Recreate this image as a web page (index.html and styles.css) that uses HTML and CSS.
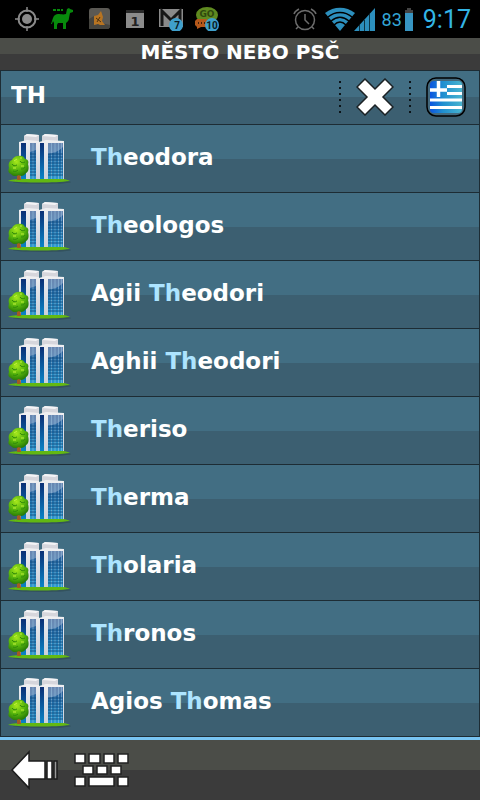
FILE: index.html
```html
<!DOCTYPE html>
<html lang="cs">
<head>
    <meta charset="UTF-8">
    <meta name="viewport" content="width=device-width, initial-scale=1.0">
    <title>Město nebo PSČ</title>
    <link rel="stylesheet" href="styles.css">
</head>
<body>
    <!-- shared city icon -->
    <svg class="defs" aria-hidden="true">
        <defs>
            <linearGradient id="glass" x1="0" y1="0" x2="0" y2="1">
                <stop offset="0" stop-color="#27508c"/>
                <stop offset="0.5" stop-color="#2579b3"/>
                <stop offset="1" stop-color="#2a9ad0"/>
            </linearGradient>
            <linearGradient id="shade" x1="0" y1="0" x2="0" y2="1">
                <stop offset="0" stop-color="#0b2f75"/>
                <stop offset="1" stop-color="#0a86c8"/>
            </linearGradient>
            <linearGradient id="wall" x1="0" y1="0" x2="0" y2="1">
                <stop offset="0" stop-color="#f0f0f2"/>
                <stop offset="1" stop-color="#c9cfda"/>
            </linearGradient>
            <radialGradient id="leaf" cx="0.4" cy="0.3" r="0.7">
                <stop offset="0" stop-color="#a6e81c"/>
                <stop offset="0.6" stop-color="#55b40c"/>
                <stop offset="1" stop-color="#2a7d08"/>
            </radialGradient>
            <symbol id="city" viewBox="0 0 64 52">
                <ellipse cx="34" cy="49" rx="29" ry="2" fill="#2d4a50" opacity="0.6"/>
                <path d="M16 3l3-2 12 1v7H16zM34 3l3-2 13 1v7H34z" fill="#d6d6dc"/>
                <path d="M16 3l3-2 12 1-3 2zM34 3l3-2 13 1-3 2z" fill="#f4f4f6"/>
                <path d="M11 9l8-2 12 1v39H11z" fill="url(#wall)"/>
                <path d="M31 9l7-2 18 1v39H31z" fill="url(#wall)"/>
                <path d="M13 10h5v37h-5zM32 10h4v37h-4z" fill="url(#shade)"/>
                <path d="M22 10h6v37h-6zM40 10h15v37H40z" fill="url(#glass)"/>
                <path d="M22 10h6v7l-6 2zM40 10h15v4c-4 4-9 6-15 7z" fill="#a9bcd6" opacity="0.5"/>
                <path d="M25 10v37M43.500 10v37M47 10v37M50.500 10v37M53.500 10v37" stroke="#9cc4e0" stroke-width="0.7" opacity="0.8"/>
                <path d="M22 21h6M22 24h6M22 27h6M22 30h6M22 33h6M22 36h6M22 39h6M22 42h6M40 21h15M40 24h15M40 27h15M40 30h15M40 33h15M40 36h15M40 39h15M40 42h15" stroke="#0d4a80" stroke-width="0.9"/>
                <path d="M0 48c4-2 12-2 17-2h38c3 0 5 1 7 2-16 2-45 2-62 0z" fill="#62b812"/>
                <path d="M0 47c14 1 48 1 62 0-12 1-48 1-62 0z" fill="#a3de25"/>
                <path d="M9 36h3l1 11H9z" fill="#a35b22"/>
                <path d="M10 23c3-1 6 0 7 3 3 0 4 3 3 5 1 3 1 8-2 9-2 3-5 4-7 2-3 2-7 1-8-1-3-1-3-4-2-6-1-4 0-7 3-8 1-2 3-4 6-4z" fill="url(#leaf)"/>
                <path d="M4 31c1 2 3 2 5 1M12 28c1 2 3 2 5 1M5 38c2 1 4 0 5-1M13 36c2 0 3 0 4-2" fill="none" stroke="#2f880b" stroke-width="1"/>
                <path d="M6 28l3-2M12 25h2M5 35h3M13 33h3" stroke="#c4f13c" stroke-width="1"/>
            </symbol>
        </defs>
    </svg>

    <div class="screen">
        <div class="status-bar">
            <div class="notifications">
                <svg width="24" height="24" viewBox="0 0 24 24">
                    <g fill="none" stroke="#8a8a8a">
                        <circle cx="12" cy="12" r="8.5" stroke-width="2"/>
                        <path d="M12 0v5M12 19v5M0 12h5M19 12h5" stroke-width="1.5"/>
                    </g>
                    <circle cx="12" cy="12" r="5" fill="#8a8a8a"/>
                </svg>
                <svg width="24" height="24" viewBox="0 0 24 24">
                    <path d="M2 11c1-3 3-4 5-4 3 0 5 1 8 0l1-5 2-1 1 1 3 1v2l-3 1-1 5c0 3-2 4-3 5v6h-3v-6H7l-1 2v4H3v-6l-1-2-1 3H0z" fill="#078a0c"/>
                    <path d="M2 3h3M6 3h3M10 3h2" stroke="#078a0c" stroke-width="2"/>
                </svg>
                <svg width="24" height="24" viewBox="0 0 24 24">
                    <rect x="2" y="1" width="21" height="21" rx="3" fill="#5b5954"/>
                    <path d="M2 22V12l5-3v9l7-2 9 2v2l-2 2z" fill="#45443f"/>
                    <path d="M7 18V9l4-1 3-4 2 6-1 4 3 4h-5l-2-1z" fill="#b77422"/>
                    <path d="M9 11l5 4M13 10l-3 5" stroke="#4b3010"/>
                </svg>
                <svg width="24" height="24" viewBox="0 0 24 24">
                    <path d="M3 3h18v18H3z" fill="#8b8b8b"/>
                    <path d="M3 3h18v3H3z" fill="#292929"/>
                    <text class="date-number" x="12" y="19">1</text>
                </svg>
                <svg width="24" height="24" viewBox="0 0 24 24">
                    <path d="M0 2h24v18H0z" fill="#8a8a8a"/>
                    <path d="M3 19V4l9 9 9-9v15" fill="none" stroke="#181818" stroke-width="3"/>
                    <circle cx="17" cy="18" r="7" fill="#3f9fcb"/>
                    <text class="count" x="18" y="22">7</text>
                </svg>
                <svg width="24" height="24" viewBox="0 0 24 24">
                    <ellipse cx="12" cy="8" rx="11" ry="8" fill="#5f8a20"/>
                    <text class="go" x="12" y="10">GO</text>
                    <path d="M2 12h10v8H6l-4 2v-2l-2-2v-4z" fill="#b4581b"/>
                    <path d="M3 16h1M6 16h1M9 16h1" stroke="#40200b" stroke-width="2"/>
                    <circle cx="17" cy="18" r="7" fill="#3f9fcb"/>
                    <text class="count" x="17" y="22">10</text>
                </svg>
            </div>
            <div class="indicators">
                <svg width="24" height="24" viewBox="0 0 24 24">
                    <g fill="none" stroke="#6c6c6c" stroke-width="1.5">
                        <circle cx="12" cy="13" r="9.5"/>
                        <path d="M12 7v6l4 4M1 7c1-3 3-4 5-5M23 7c-1-3-3-4-5-5M5 20l-2 2M19 20l2 2"/>
                    </g>
                </svg>
                <svg class="wifi" width="50" height="24" viewBox="0 0 50 24">
                    <path d="M0 6C9-1 21-1 30 6L15 24z" fill="#2c8fbd"/>
                    <path d="M3 10C10 4 20 4 27 10M6 14C12 9 18 9 24 14M9 18C13 14 17 14 21 18" fill="none" stroke="#000" stroke-width="1.5"/>
                    <path d="M29 24L50 1v23z" fill="#2c8fbd"/>
                    <path d="M34.500 18v6M39.500 13v11M44.500 7v17" stroke="#0b3547" stroke-width="1"/>
                </svg>
                <span class="percent">83</span>
                <svg width="8" height="24" viewBox="0 0 8 24">
                    <path d="M2 1h4v2h2v3H0V3h2z" fill="#444"/>
                    <path d="M0 6h8v18H0z" fill="#3795c2"/>
                </svg>
                <span class="clock">9:17</span>
            </div>
        </div>

        <h1 class="title">MĚSTO NEBO PSČ</h1>

        <form class="search">
            <input class="search-input" type="text" value="TH" aria-label="Město nebo PSČ">
            <span class="dots"></span>
            <button class="icon-button" type="button" aria-label="Smazat">
                <svg width="38" height="38" viewBox="0 0 38 38">
                    <path d="M9 1L19 11 29 1 37 9 27 19 37 29 29 37 19 27 9 37 1 29 11 19 1 9z" fill="#fff" stroke="#1c2225" stroke-width="1.5"/>
                </svg>
            </button>
            <span class="dots"></span>
            <button class="icon-button" type="button" aria-label="Řecko">
                <svg width="40" height="40" viewBox="0 0 40 40">
                    <defs>
                        <linearGradient id="flag">
                            <stop offset="0" stop-color="#0b55e0"/>
                            <stop offset="0.4" stop-color="#1f8fd0"/>
                            <stop offset="1" stop-color="#48b4cf"/>
                        </linearGradient>
                        <clipPath id="flag-clip"><rect x="4" y="4" width="32" height="32" rx="4"/></clipPath>
                    </defs>
                    <rect x="1" y="1" width="38" height="38" rx="9" fill="#42687c" stroke="#000" stroke-width="1.5"/>
                    <g clip-path="url(#flag-clip)">
                        <path d="M4 4h32v32H4z" fill="url(#flag)"/>
                        <path d="M21 9.500h15M21 16.500h15M4 23h32M4 30.500h32" stroke="#fff" stroke-width="3"/>
                        <path d="M4 13h17M12.500 4v16" stroke="#fff" stroke-width="3.500"/>
                    </g>
                </svg>
            </button>
        </form>

        <ul class="results">
            <li><button class="result" type="button"><svg class="city"><use href="#city"/></svg><span><mark>Th</mark>eodora</span></button></li>
            <li><button class="result" type="button"><svg class="city"><use href="#city"/></svg><span><mark>Th</mark>eologos</span></button></li>
            <li><button class="result" type="button"><svg class="city"><use href="#city"/></svg><span>Agii <mark>Th</mark>eodori</span></button></li>
            <li><button class="result" type="button"><svg class="city"><use href="#city"/></svg><span>Aghii <mark>Th</mark>eodori</span></button></li>
            <li><button class="result" type="button"><svg class="city"><use href="#city"/></svg><span><mark>Th</mark>eriso</span></button></li>
            <li><button class="result" type="button"><svg class="city"><use href="#city"/></svg><span><mark>Th</mark>erma</span></button></li>
            <li><button class="result" type="button"><svg class="city"><use href="#city"/></svg><span><mark>Th</mark>olaria</span></button></li>
            <li><button class="result" type="button"><svg class="city"><use href="#city"/></svg><span><mark>Th</mark>ronos</span></button></li>
            <li><button class="result" type="button"><svg class="city"><use href="#city"/></svg><span>Agios <mark>Th</mark>omas</span></button></li>
        </ul>

        <div class="toolbar">
            <button class="icon-button" type="button" aria-label="Zpět">
                <svg width="48" height="40" viewBox="0 0 48 40">
                    <g fill="#fff" stroke="#1c1c1c" stroke-width="1.500">
                        <path d="M1 20L18 2v9h16v18H18v9z"/>
                        <path d="M36 11h5v18h-5z"/>
                        <path d="M43 11h3v18h-3z" fill="#999"/>
                    </g>
                </svg>
            </button>
            <button class="icon-button" type="button" aria-label="Klávesnice">
                <svg width="56" height="36" viewBox="0 0 56 36">
                    <g fill="#fff" stroke="#222" stroke-width="1.500">
                        <path d="M1 2h10v9H1zM15 2h11v9H15zM30 2h10v9H30zM44 2h10v9H44z"/>
                        <path d="M9 14h10v8H9zM23 14h10v8H23zM37 14h10v8H37z"/>
                        <path d="M1 25h10v9H1zM15 25h25v9H15zM44 25h10v9H44z"/>
                    </g>
                </svg>
            </button>
        </div>
    </div>
</body>
</html>
```
FILE: styles.css
```css
* {
    box-sizing: border-box;
}

body {
    margin: 0;
    background-color: #3b3b3b;
    color: #fff;
    font-family: "DejaVu Sans", Verdana, sans-serif;
    font-weight: bold;
}

button,
input {
    background: none;
    border: none;
    color: inherit;
    font: inherit;
    margin: 0;
    padding: 0;
}

button {
    cursor: pointer;
}

svg {
    display: block;
    flex-shrink: 0;
}

.defs {
    position: absolute;
    width: 0;
    height: 0;
}

.screen {
    display: flex;
    flex-direction: column;
    min-height: 100vh;
}

/* status bar */
.status-bar {
    display: flex;
    justify-content: space-between;
    align-items: center;
    height: 38px;
    padding: 0 9px 0 15px;
    background-color: #000;
    font-family: Roboto, sans-serif;
    font-weight: normal;
    color: #33a6d6;
}

.notifications {
    display: flex;
    gap: 12px;
}

.indicators {
    display: flex;
    align-items: center;
}

.wifi {
    margin: 0 7px 0 8px;
}

.percent {
    margin-right: 3px;
    font-size: 18px;
}

.clock {
    margin-left: 10px;
    font-size: 25px;
    color: #33b5e5;
}

.date-number,
.count,
.go {
    text-anchor: middle;
    font-family: "DejaVu Sans", sans-serif;
    font-weight: bold;
}

.date-number {
    font-size: 13px;
    fill: #222;
}

.count {
    font-family: Roboto, sans-serif;
    font-size: 10px;
    fill: #0a1a22;
}

.go {
    font-size: 9px;
    fill: #2f480e;
}

.title {
    height: 32px;
    margin: 0;
    background: linear-gradient(#4b4d48 50%, #3b3b3b 50%);
    font-size: 20px;
    line-height: 28px;
    text-align: center;
}

/* search row */
.search {
    display: flex;
    align-items: center;
    gap: 15px;
    height: 55px;
    padding: 0 13px 2px 0;
    border: 1px solid #1d2c34;
    background: linear-gradient(#426e83 50%, #3c5f71 50%);
}

.search-input {
    flex: 1;
    min-width: 0;
    padding: 0 0 4px 10px;
    font-size: 23px;
    outline: none;
}

.dots {
    width: 2px;
    height: 32px;
    background: repeating-linear-gradient(#0c1418 0 2px, transparent 2px 6px);
}

/* results */
.results {
    flex: 1;
    margin: 0;
    padding: 0;
    list-style: none;
    border: solid #1d2c34;
    border-width: 0 1px;
}

.result {
    display: flex;
    align-items: center;
    gap: 19px;
    width: 100%;
    height: 68px;
    padding-left: 7px;
    border-bottom: 1px solid #1d2c34;
    background: linear-gradient(#426e83 51%, #3c5f71 51%);
    font-size: 23px;
    text-align: left;
}

.result span {
    padding-bottom: 4px;
}

.city {
    width: 64px;
    height: 52px;
}

mark {
    background: none;
    color: #ade4ff;
}

/* bottom toolbar */
.toolbar {
    display: flex;
    align-items: center;
    gap: 15px;
    height: 63px;
    padding-left: 11px;
    border-top: 3px solid #78c4f2;
    background: linear-gradient(#4b4d48 50%, #3b3b3b 50%);
}
```
